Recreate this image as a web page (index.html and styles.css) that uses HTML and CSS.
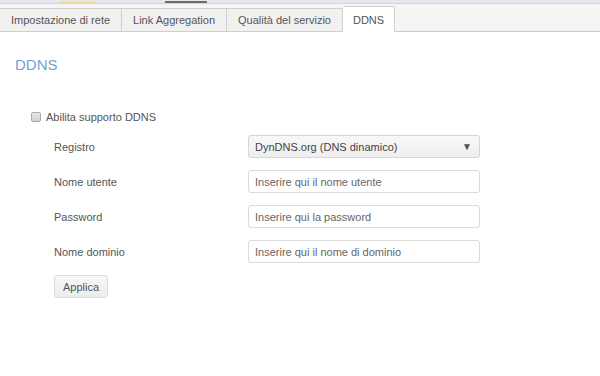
FILE: index.html
```html
<!DOCTYPE html>
<html lang="it">
<head>
  <meta charset="UTF-8">
  <title>DDNS</title>
  <link rel="stylesheet" href="styles.css">
</head>
<body>
  <div class="top-strip">
    <span class="strip-mark yellow"></span>
    <span class="strip-mark dark"></span>
  </div>
  <div class="tab-bar">
    <a class="tab" href="#">Impostazione di rete</a>
    <a class="tab" href="#">Link Aggregation</a>
    <a class="tab" href="#">Qualità del servizio</a>
    <a class="tab active" href="#">DDNS</a>
  </div>
  <div class="content">
    <h2 class="section-title">DDNS</h2>
    <label class="enable-row">
      <input type="checkbox" class="check">
      <span>Abilita supporto DDNS</span>
    </label>
    <div class="form-grid">
      <span class="field-label">Registro</span>
      <div class="select-box">
        <span>DynDNS.org (DNS dinamico)</span>
        <span class="arrow">▼</span>
      </div>
      <span class="field-label">Nome utente</span>
      <input type="text" class="text-input" placeholder="Inserire qui il nome utente">
      <span class="field-label">Password</span>
      <input type="password" class="text-input" placeholder="Inserire qui la password">
      <span class="field-label">Nome dominio</span>
      <input type="text" class="text-input" placeholder="Inserire qui il nome di dominio">
      <div class="button-cell">
        <button class="apply-btn">Applica</button>
      </div>
    </div>
  </div>
</body>
</html>
```

FILE: styles.css
```css
body {
  margin: 0;
  font-family: 'Liberation Sans', Arial, sans-serif;
  font-size: 11px;
  color: #555;
  background-color: #fff;
}
/* Strip of the window above */
.top-strip {
  height: 3px;
  background-color: #e3e8ee;
  border-bottom: 1px solid #cfd6de;
  display: flex;
  align-items: center;
}
.strip-mark {
  height: 2px;
}
.strip-mark.yellow {
  width: 35px;
  margin-left: 60px;
  background-color: #f3dfa0;
}
.strip-mark.dark {
  width: 42px;
  margin-left: 70px;
  background-color: #6b6b6b;
}
.tab-bar {
  display: flex;
  align-items: flex-end;
  height: 27px;
  background-color: #f5f5f5;
  border-bottom: 1px solid #c9c9c9;
}
.tab {
  display: block;
  height: 24px;
  line-height: 23px;
  box-sizing: border-box;
  padding: 0 11px;
  margin-bottom: -1px;
  background-color: #f1f1f1;
  border: 1px solid #cfcfcf;
  border-left: none;
  color: #555;
  text-decoration: none;
  white-space: nowrap;
}
.tab.active {
  height: 26px;
  line-height: 26px;
  padding: 0 10px;
  background-color: #fff;
  border-bottom-color: #fff;
  color: #555;
  border-radius: 2px 2px 0 0;
}
.content {
  padding: 24px 15px;
}
.section-title {
  margin: 0 0 35px;
  font-size: 15px;
  line-height: 18px;
  font-weight: normal;
  color: #72a0d2;
}
.enable-row {
  display: flex;
  align-items: center;
  gap: 5px;
  height: 16px;
  margin-left: 16px;
}
/* Grey rounded checkbox */
.check {
  appearance: none;
  width: 10px;
  height: 10px;
  margin: 0;
  border: 1px solid #aaa;
  border-radius: 2px;
  background: linear-gradient(#e8e8e8, #cfcfcf);
}
.form-grid {
  display: grid;
  grid-template-columns: 194px 232px;
  row-gap: 12px;
  align-items: center;
  margin: 10px 0 0 39px;
}
.field-label {
  color: #555;
}
.select-box {
  height: 23px;
  box-sizing: border-box;
  display: flex;
  align-items: center;
  justify-content: space-between;
  padding: 0 7px 0 6px;
  border: 1px solid #d6d6d6;
  border-radius: 3px;
  background: linear-gradient(#f8f8f8, #eeeeee);
  color: #444;
}
.arrow {
  font-size: 10px;
  color: #555;
}
.text-input {
  height: 23px;
  box-sizing: border-box;
  margin: 0;
  padding: 0 6px;
  border: 1px solid #dadada;
  border-radius: 3px;
  font-family: inherit;
  font-size: 11px;
  color: #333;
  background-color: #fff;
}
.text-input::placeholder {
  color: #666;
}
.button-cell {
  grid-column: 1 / 3;
}
.apply-btn {
  height: 23px;
  padding: 0 8px;
  border: 1px solid #dcdcdc;
  border-radius: 3px;
  background: linear-gradient(#f7f7f7, #ececec);
  font-family: inherit;
  font-size: 11px;
  color: #555;
}
```
